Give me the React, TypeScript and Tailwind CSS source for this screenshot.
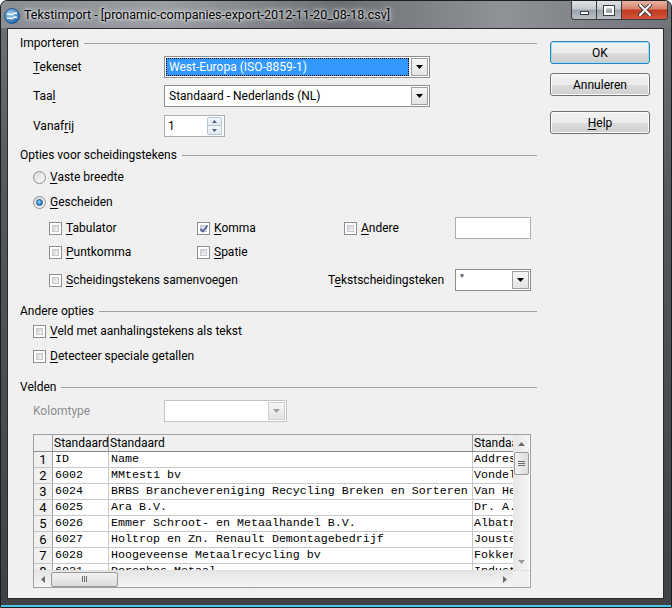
import React from "react";

const ui = "font-['Segoe_UI',Roboto,'Noto_Sans',sans-serif] text-[12px] leading-none text-black";
const mono = "font-['Liberation_Mono','Courier_New',monospace] text-[11.67px] leading-none";

function U({ c }: { c: string }) {
  return <span className="underline decoration-1 underline-offset-[2px]">{c}</span>;
}

function Check({ checked }: { checked?: boolean }) {
  return (
    <span className="relative flex w-[13px] h-[13px] shrink-0 border border-[#8e8f8f] bg-white p-[2px]">
      <span className="flex-1 bg-[linear-gradient(135deg,#d2d4d8,#f5f5f5)] border border-[#c5c8cc]" />
      {checked && (
        <svg className="absolute left-[1px] top-[1px]" width="10" height="10" viewBox="0 0 10 10">
          <path d="M1.5 5 L4 7.5 L8.5 1.5" fill="none" stroke="#4a5f97" strokeWidth="1.8" />
        </svg>
      )}
    </span>
  );
}

function Radio({ checked }: { checked?: boolean }) {
  return (
    <span className="flex items-center justify-center w-[13px] h-[13px] shrink-0 rounded-full border border-[#8e8f8f] bg-[linear-gradient(135deg,#d6d8db,#fbfbfb)]">
      {checked && (
        <span className="w-[7px] h-[7px] rounded-full border border-[#1b4f8c] bg-[radial-gradient(circle_at_40%_35%,#8fdcff,#1f7fd0_70%)]" />
      )}
    </span>
  );
}

function Arrow({ disabled }: { disabled?: boolean }) {
  return (
    <div className={`flex items-center justify-center w-[17px] h-[18px] border ${disabled ? "border-[#d0d0d0]" : "border-[#a0a0a0]"} bg-[linear-gradient(#f6f6f6,#e4e4e4)]`}>
      <svg width="7" height="4" viewBox="0 0 7 4">
        <path d="M0 0 H7 L3.5 4 Z" fill={disabled ? "#a0a0a0" : "#000"} />
      </svg>
    </div>
  );
}

function Select({ w, text, selected, disabled }: { w: string; text?: string; selected?: boolean; disabled?: boolean }) {
  return (
    <div className={`flex items-center h-[22px] ${w} border ${disabled ? "border-[#c4c4c4]" : "border-[#8e8f8f]"} bg-white p-[1px] gap-[2px]`}>
      <div className={`flex-1 h-full flex items-center pl-[2px] ${selected ? "bg-[#3399ff] text-white border border-dotted border-black" : "pl-[3px] text-black"}`}>
        {text}
      </div>
      <Arrow disabled={disabled} />
    </div>
  );
}

function Button({ children, def }: { children: React.ReactNode; def?: boolean }) {
  return (
    <div
      className={`flex items-center justify-center w-[100px] h-[23px] rounded-[3px] border ${def ? "border-[#3c7fb1] shadow-[inset_0_0_0_1px_#8fe0fa]" : "border-[#707070] shadow-[inset_0_0_0_1px_#fbfbfb]"} bg-[linear-gradient(#f2f2f2_0%,#ebebeb_50%,#dddddd_51%,#cfcfcf_100%)]`}
    >
      {children}
    </div>
  );
}

function Group({ title }: { title: string }) {
  return (
    <div className="flex items-center h-[16px]">
      <span>{title}</span>
      <span className="flex-1 ml-[5px] border-t border-[#a0a0a0]" />
    </div>
  );
}

const rows = [
  ["1", "ID", "Name", "Address"],
  ["2", "6002", "MMtest1 bv", "Vondellaan"],
  ["3", "6024", "BRBS Branchevereniging Recycling Breken en Sorteren", "Van Heemstraweg"],
  ["4", "6025", "Ara B.V.", "Dr. A.F. Philipsweg"],
  ["5", "6026", "Emmer Schroot- en Metaalhandel B.V.", "Albatrosstraat"],
  ["6", "6027", "Holtrop en Zn. Renault Demontagebedrijf", "Jousterweg"],
  ["7", "6028", "Hoogeveense Metaalrecycling bv", "Fokkerstraat"],
  ["8", "6031", "Dorenbos Metaal", "Industrieweg"],
];

function Grid() {
  return (
    <div className="ml-[13px] mt-[12px] w-[498px] h-[154px] border border-[#a0a0a0] bg-white flex flex-col">
      <div className="flex h-[135px]">
        <div className="w-[479px] overflow-hidden">
          <div className="flex h-[17px] bg-[#f0f0f0] border-b border-[#8a8a8a]">
            <div className="w-[19px] border-r border-[#a0a0a0]" />
            <div className="w-[56px] border-r border-[#a0a0a0] flex items-center pl-[1px]">Standaard</div>
            <div className="w-[364px] border-r border-[#a0a0a0] flex items-center pl-[1px]">Standaard</div>
            <div className="w-[40px] flex items-center pl-[1px] overflow-hidden whitespace-nowrap">Standaard</div>
          </div>
          {rows.map((r) => (
            <div key={r[0]} className="flex h-[16px] border-b border-[#c8c8c8]">
              <div className="w-[19px] bg-[#f0f0f0] border-r border-[#a0a0a0] flex items-center justify-center text-[13px]">{r[0]}</div>
              <div className={`w-[56px] border-r border-[#c8c8c8] flex items-center pl-[2px] ${mono}`}>{r[1]}</div>
              <div className={`w-[364px] border-r border-[#c8c8c8] flex items-center pl-[2px] whitespace-nowrap ${mono}`}>{r[2]}</div>
              <div className={`w-[40px] flex items-center pl-[1px] overflow-hidden whitespace-nowrap ${mono}`}>{r[3]}</div>
            </div>
          ))}
        </div>
        {/* vertical scrollbar */}
        <div className="w-[16px] flex flex-col items-center bg-[linear-gradient(90deg,#e6e6e6,#f4f4f4)]">
          <div className="h-[17px] flex items-center justify-center">
            <svg width="7" height="4" viewBox="0 0 7 4"><path d="M0 4 H7 L3.5 0 Z" fill="#6b6b6b" /></svg>
          </div>
          <div className="w-[15px] h-[23px] rounded-[2px] border border-[#9a9a9a] bg-[linear-gradient(90deg,#f2f2f2,#dcdcdc)] flex flex-col items-center justify-center gap-[1px]">
            <span className="w-[7px] border-t border-[#6b6b6b]" />
            <span className="w-[7px] border-t border-[#6b6b6b]" />
            <span className="w-[7px] border-t border-[#6b6b6b]" />
          </div>
          <div className="flex-1" />
          <div className="h-[17px] flex items-center justify-center">
            <svg width="7" height="4" viewBox="0 0 7 4"><path d="M0 0 H7 L3.5 4 Z" fill="#9a9a9a" /></svg>
          </div>
        </div>
      </div>
      <div className="flex h-[17px] border-t border-[#e0e0e0]">
        <div className="w-[479px] flex items-center bg-[linear-gradient(#e6e6e6,#f4f4f4)]">
          <div className="w-[17px] flex items-center justify-center">
            <svg width="4" height="7" viewBox="0 0 4 7"><path d="M4 0 V7 L0 3.5 Z" fill="#6b6b6b" /></svg>
          </div>
          <div className="w-[67px] h-[15px] rounded-[2px] border border-[#9a9a9a] bg-[linear-gradient(#f2f2f2,#dcdcdc)] flex items-center justify-center gap-[1px]">
            <span className="h-[6px] border-l border-[#6b6b6b]" />
            <span className="h-[6px] border-l border-[#6b6b6b]" />
            <span className="h-[6px] border-l border-[#6b6b6b]" />
          </div>
          <div className="flex-1" />
          <div className="w-[17px] flex items-center justify-center">
            <svg width="4" height="7" viewBox="0 0 4 7"><path d="M0 0 V7 L4 3.5 Z" fill="#6b6b6b" /></svg>
          </div>
        </div>
        <div className="w-[16px] bg-[#f0f0f0]" />
      </div>
    </div>
  );
}

function TitleBar() {
  return (
    <div className="flex items-start h-[27px] bg-[linear-gradient(90deg,#8a8e93_0%,#9a9da1_25%,#6c7075_50%,#8f9296_75%,#70747a_100%)]">
      <svg className="ml-[3px] mt-[7px]" width="16" height="16" viewBox="0 0 16 16">
        <defs>
          <radialGradient id="oo" cx="40%" cy="35%" r="70%">
            <stop offset="0" stopColor="#9fd0f5" />
            <stop offset="1" stopColor="#1d5fa8" />
          </radialGradient>
        </defs>
        <circle cx="8" cy="8" r="7.5" fill="url(#oo)" stroke="#1a4f8a" strokeWidth="0.8" />
        <path d="M3 6.5 C5 4.5 7 8 9 6 C10.5 4.6 12 5 13 5.5" fill="none" stroke="#fff" strokeWidth="1.5" />
        <path d="M3 10.5 C5 8.5 7 12 9 10 C10.5 8.6 12 9 13 9.5" fill="none" stroke="#fff" strokeWidth="1.5" />
      </svg>
      <span className="ml-[4px] mt-[8px] text-[12.5px] [text-shadow:0_0_6px_#ffffff,0_0_3px_#ffffff]">
        Tekstimport - [pronamic-companies-export-2012-11-20_08-18.csv]
      </span>
      <div className="flex-1" />
      <div className="flex mr-[3px] h-[19px] border border-t-0 border-[#3b3b3b] rounded-b-[4px] overflow-hidden">
        <div className="w-[25px] flex items-center justify-center border-r border-[#3b3b3b] bg-[linear-gradient(#dfe3e8_0%,#c3c9cf_45%,#9aa2aa_50%,#b9c0c6_100%)]">
          <span className="w-[9px] h-[4px] mt-[5px] bg-white border border-[#3f3f3f]" />
        </div>
        <div className="w-[25px] flex items-center justify-center border-r border-[#3b3b3b] bg-[linear-gradient(#dfe3e8_0%,#c3c9cf_45%,#9aa2aa_50%,#b9c0c6_100%)]">
          <span className="w-[10px] h-[9px] border-[2px] border-white outline outline-1 outline-[#3f3f3f]" />
        </div>
        <div className="w-[45px] flex items-center justify-center bg-[linear-gradient(#eab3a3_0%,#d9806a_45%,#c0391f_50%,#d2553a_100%)]">
          <svg width="14" height="12" viewBox="0 0 14 12">
            <path d="M2 1 L12 11 M12 1 L2 11" stroke="#3f3f3f" strokeWidth="4" strokeLinecap="round" />
            <path d="M2 1 L12 11 M12 1 L2 11" stroke="#fff" strokeWidth="2" strokeLinecap="round" />
          </svg>
        </div>
      </div>
    </div>
  );
}

export default function App() {
  return (
    <div className={`${ui} w-[672px] h-[608px] rounded-t-[7px] border border-[#1e1e1e] bg-[linear-gradient(#6f7378_0%,#55595d_30%,#3e4145_100%)] flex flex-col overflow-hidden`}>
      <TitleBar />
      <div className="flex-1 flex pl-[6px] pr-[7px] pb-[8px] shadow-[inset_0_-2px_0_#47c4e6]">
        <div className="flex-1 flex border border-[#2a2a2a] bg-[#f0f0f0]">
          {/* left column */}
          <div className="w-[529px] pl-[12px] flex flex-col">
            <div className="mt-[6px]"><Group title="Importeren" /></div>
            <div className="mt-[5px] flex items-center h-[22px] pl-[13px]">
              <span className="w-[131px]"><U c="T" />ekenset</span>
              <Select w="w-[266px]" text="West-Europa (ISO-8859-1)" selected />
            </div>
            <div className="mt-[7px] flex items-center h-[22px] pl-[13px]">
              <span className="w-[131px]">Taa<U c="l" /></span>
              <Select w="w-[266px]" text="Standaard - Nederlands (NL)" />
            </div>
            <div className="mt-[8px] flex items-center h-[22px] pl-[13px]">
              <span className="w-[131px]">Vanaf<U c="r" />ij</span>
              <div className="flex items-center w-[61px] h-[22px] border border-[#abadb3] bg-white pl-[3px] pr-[2px]">
                <span className="flex-1">1</span>
                <div className="flex flex-col">
                  <div className="w-[15px] h-[9px] border border-[#b4c4d4] rounded-t-[2px] bg-[linear-gradient(#f4f7fa,#e0e8ef)] flex items-center justify-center">
                    <svg width="5" height="3" viewBox="0 0 5 3"><path d="M0 3 H5 L2.5 0 Z" fill="#4d6185" /></svg>
                  </div>
                  <div className="w-[15px] h-[9px] border border-t-0 border-[#b4c4d4] rounded-b-[2px] bg-[linear-gradient(#f4f7fa,#e0e8ef)] flex items-center justify-center">
                    <svg width="5" height="3" viewBox="0 0 5 3"><path d="M0 0 H5 L2.5 3 Z" fill="#4d6185" /></svg>
                  </div>
                </div>
              </div>
            </div>

            <div className="mt-[10px]"><Group title="Opties voor scheidingstekens" /></div>
            <div className="mt-[6px] flex items-center h-[16px] pl-[13px] gap-[4px]">
              <Radio /><span><U c="V" />aste breedte</span>
            </div>
            <div className="mt-[9px] flex items-center h-[16px] pl-[13px] gap-[4px]">
              <Radio checked /><span><U c="G" />escheiden</span>
            </div>
            <div className="mt-[7px] flex items-center h-[22px] pl-[29px]">
              <div className="w-[148px] flex items-center gap-[4px]"><Check /><span><U c="T" />abulator</span></div>
              <div className="w-[147px] flex items-center gap-[4px]"><Check checked /><span><U c="K" />omma</span></div>
              <div className="w-[111px] flex items-center gap-[4px]"><Check /><span><U c="A" />ndere</span></div>
              <div className="w-[76px] h-[22px] border border-[#abadb3] bg-white" />
            </div>
            <div className="mt-[5px] flex items-center h-[16px] pl-[29px]">
              <div className="w-[148px] flex items-center gap-[4px]"><Check /><span><U c="P" />untkomma</span></div>
              <div className="w-[147px] flex items-center gap-[4px]"><Check /><span><U c="S" />patie</span></div>
            </div>
            <div className="mt-[9px] flex items-center h-[22px] pl-[29px]">
              <div className="w-[279px] flex items-center gap-[4px]"><Check /><span><U c="S" />cheidingstekens samenvoegen</span></div>
              <span className="w-[127px]">T<U c="e" />kstscheidingsteken</span>
              <Select w="w-[76px]" text={'"'} />
            </div>

            <div className="mt-[12px]"><Group title="Andere opties" /></div>
            <div className="mt-[4px] flex items-center h-[16px] pl-[13px] gap-[4px]">
              <Check /><span><U c="V" />eld met aanhalingstekens als tekst</span>
            </div>
            <div className="mt-[9px] flex items-center h-[16px] pl-[13px] gap-[4px]">
              <Check /><span><U c="D" />etecteer speciale getallen</span>
            </div>

            <div className="mt-[15px]"><Group title="Velden" /></div>
            <div className="mt-[5px] flex items-center h-[22px] pl-[13px]">
              <span className="w-[131px] text-[#8d8d8d]">Kolomtype</span>
              <Select w="w-[123px]" disabled />
            </div>
            <Grid />
          </div>

          {/* right column */}
          <div className="ml-[13px] w-[100px] pt-[12px] flex flex-col">
            <Button def>OK</Button>
            <div className="mt-[9px]"><Button>Annuleren</Button></div>
            <div className="mt-[15px]"><Button><U c="H" />elp</Button></div>
          </div>
        </div>
      </div>
    </div>
  );
}
